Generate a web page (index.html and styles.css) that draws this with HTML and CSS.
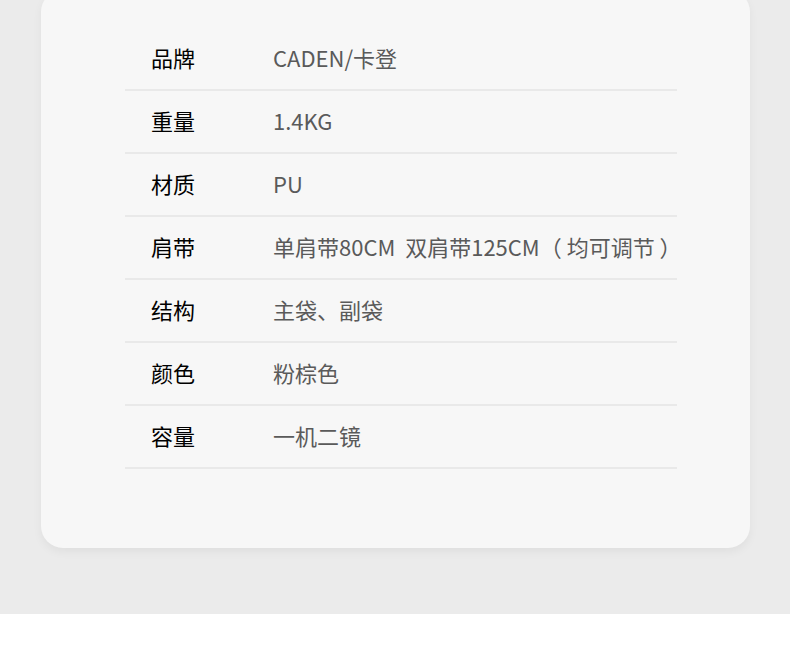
FILE: index.html
```html
<!DOCTYPE html>
<html lang="zh-CN">
<head>
    <meta charset="utf-8">
    <meta name="viewport" content="width=device-width, initial-scale=1">
    <title>产品参数</title>
    <link rel="stylesheet" href="styles.css">
</head>
<body>

<div class="page">
    <div class="card">
        <div class="spec">
            <div class="row"><span class="label">品牌</span><span class="value">CADEN/卡登</span></div>
            <div class="row"><span class="label">重量</span><span class="value">1.4KG</span></div>
            <div class="row"><span class="label">材质</span><span class="value">PU</span></div>
            <div class="row"><span class="label">肩带</span><span class="value">单肩带80CM&nbsp;&nbsp;双肩带125CM（ 均可调节 ）</span></div>
            <div class="row"><span class="label">结构</span><span class="value">主袋、副袋</span></div>
            <div class="row"><span class="label">颜色</span><span class="value">粉棕色</span></div>
            <div class="row"><span class="label">容量</span><span class="value">一机二镜</span></div>
        </div>
    </div>
</div>

</body>
</html>
```

FILE: styles.css
```css
body {
    margin: 0;
    background: #ffffff;
    font-family: "Noto Sans CJK SC", "Noto Sans", sans-serif;
}

.page {
    height: 614px;
    background: #ebebeb;
    overflow: hidden;
}

.card {
    margin: -10px 0 0 41px;
    width: 709px;
    padding: 38px 0 79px 84px;
    box-sizing: border-box;
    background: #f7f7f7;
    border-radius: 22px;
    box-shadow: 0 4px 10px rgba(0, 0, 0, 0.05);
}

.spec {
    width: 552px;
}

.row {
    display: flex;
    align-items: center;
    height: 57px;
    padding: 0 0 4px 26px;
    border-bottom: 2px solid #e9e9e9;
}

.label {
    width: 122px;
    flex-shrink: 0;
    font-size: 22px;
    color: #000000;
}

.value {
    font-size: 22px;
    color: #5a5a5a;
    white-space: nowrap;
}
```
